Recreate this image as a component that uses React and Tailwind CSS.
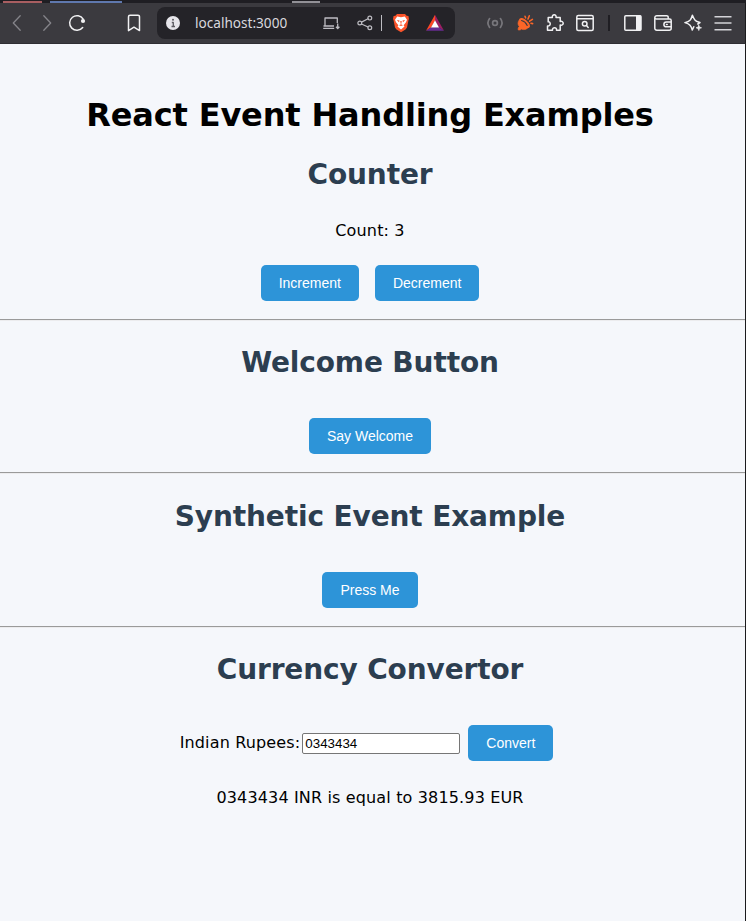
import { useState } from "react";

function Icon({ className = "", children }) {
  return (
    <svg
      viewBox="0 0 20 20"
      fill="none"
      stroke="#f1f1f3"
      strokeWidth="1.5"
      strokeLinecap="round"
      strokeLinejoin="round"
      className={`h-5 w-5 shrink-0 ${className}`}
    >
      {children}
    </svg>
  );
}

function AddressBar() {
  return (
    <div className="ml-[13px] flex h-8 w-[298px] shrink-0 items-center rounded-lg bg-[#242328] pl-1.5">
      <Icon>
        <circle cx="10" cy="10" r="7" fill="#e6e5ea" stroke="none" />
        <path d="M8.8 9.5H10.3V13.5M8.5 13.5H12" stroke="#5c5b61" strokeWidth="1.3" strokeLinecap="butt" />
        <circle cx="10" cy="6.7" r="1" fill="#5c5b61" stroke="none" />
      </Icon>
      <span className="ml-3 w-[127px] whitespace-nowrap font-['Noto_Sans',sans-serif] text-[13.6px] leading-5 tracking-normal text-[#d9d8de]">
        localhost:3000
      </span>
      <Icon>
        <g stroke="#bdbcc2" strokeWidth="1.3" strokeLinecap="butt">
          <path d="M3 13V5H15.3V10M1.2 15.3H12.2M1.5 13H12" />
          <path d="M15.7 10.5V15.5M14 13.8L15.7 15.6L17.4 13.8" />
        </g>
      </Icon>
      <Icon className="ml-[13px]">
        <g stroke="#bdbcc2" strokeWidth="1.2">
          <path d="M6.5 9.1L13 5.8M6.5 11L13 14" />
          <circle cx="4.8" cy="10" r="1.9" />
          <circle cx="14.8" cy="5.1" r="1.9" />
          <circle cx="14.8" cy="14.8" r="1.9" />
        </g>
      </Icon>
      <span className="ml-1.5 h-4 w-px bg-[#bdbcc2]" />
      <Icon className="ml-[9px]">
        <g stroke="none">
          <path d="M6 1H14L15.6 2.8L17.4 3L18 6L17.5 7L16 14.5L14.5 16.5L10 19.3L5.5 16.5L4 14.5L2.5 7L2 6L2.6 3L4.4 2.8Z" fill="#fb542b" />
          <path d="M6.2 3.6L10 4.2L13.8 3.6L16 6.7L15 9.3L12.6 12.2L13.5 13.5L10 16.6L6.5 13.5L7.4 12.2L5 9.3L4 6.7Z" fill="#fff" />
          <path d="M5.8 7L8.5 7.6L8 9.2ZM14.2 7L11.5 7.6L12 9.2ZM8 12.2L10 11.2L12 12.2L10 13ZM9.3 8H10.7L10.4 10.7H9.6Z" fill="#fb542b" />
        </g>
      </Icon>
      <Icon className="ml-3.5">
        <g stroke="none">
          <path d="M10 1.8L1 17.7L6.2 14.2L10 7.5Z" fill="#ff4724" />
          <path d="M10 1.8L19 17.7L13.8 14.2L10 7.5Z" fill="#9e1f63" />
          <path d="M1 17.7H19L13.8 14.2H6.2Z" fill="#662d91" />
          <path d="M10 7.2L6 14.4H14Z" fill="#fff" />
        </g>
      </Icon>
    </div>
  );
}

function BrowserChrome() {
  return (
    <header className="h-11 bg-[#3b3a3f]">
      <div className="flex h-[3px] items-start bg-[#1f1e23]">
        <span className="mt-px ml-[3px] h-0.5 w-[39px] bg-[#a85e61]" />
        <span className="mt-px ml-2 h-0.5 w-[72px] bg-[#5f78ae]" />
        <span className="mt-px ml-[170px] h-0.5 w-7 bg-[#929197]" />
      </div>
      <div className="flex h-[41px] items-center border-r border-b border-r-[#1b1b1d] border-b-[#2f2e33] pl-[7px]">
        <Icon>
          <path d="M13.2 2.8L6.3 10L13.2 17.2" stroke="#85848a" strokeWidth="1.3" />
        </Icon>
        <Icon className="ml-2.5">
          <path d="M6.8 2.8L13.7 10L6.8 17.2" stroke="#85848a" strokeWidth="1.3" />
        </Icon>
        <Icon className="ml-2.5">
          <path d="M16.2 6.2A7.3 7.3 0 1 0 15.7 14.5" />
          <circle cx="16" cy="8" r="2.1" fill="#f1f1f3" stroke="none" />
        </Icon>
        <Icon className="ml-[37px]">
          <path d="M4.5 3.7A1.5 1.5 0 0 1 6 2.2H14A1.5 1.5 0 0 1 15.5 3.7V17.6L10 14.2L4.5 17.6Z" />
        </Icon>
        <AddressBar />
        <div className="ml-[30px] flex items-center gap-2.5">
          <Icon>
            <g stroke="#77767b" strokeWidth="1.7">
              <circle cx="10" cy="10" r="2.4" />
              <path d="M4.6 5.6Q1.2 10 4.6 14.4M15.4 5.6Q18.8 10 15.4 14.4" />
            </g>
          </Icon>
          <Icon>
            <path d="M4.6 6.4C2.4 9 2.6 11.6 4.3 13.6L3.2 15V17H5.2L6.3 16C9.2 17.4 12.4 16.2 14.2 13.4Z" fill="#fb6628" stroke="#fb6628" strokeWidth="0.6" />
            <ellipse cx="9.6" cy="10" rx="5.9" ry="2.5" transform="rotate(43 9.6 10)" fill="#fb6628" stroke="#fb6628" strokeWidth="1.2" />
            <path d="M6.6 7.5C8.6 8 11.2 10.3 12.2 12.4" stroke="#3b3a3f" strokeWidth="1.2" />
            <path d="M10.6 4.8L10 3.3M13 6L14.3 2.8M14.6 8.2L17.4 6.4M16 10.2L17.6 10.6" stroke="#fb6628" strokeWidth="1.6" />
          </Icon>
          <Icon>
            <path d="M3.2 4.5H7.4C6.4 0.9 12 0.9 11 4.5H15.2V8.5C19.2 7.5 19.2 13 15.2 12V17.2H11.5C12 13.8 7.2 13.8 7.5 17.2H2.5V13C6 13.5 6 8.5 3.2 8.8Z" />
          </Icon>
          <Icon>
            <rect x="1.8" y="2.5" width="16.4" height="15" rx="1.5" />
            <path d="M2 5.7H18" />
            <circle cx="9.7" cy="10.8" r="2.3" />
            <path d="M11.5 12.6L13.2 14.4" />
          </Icon>
        </div>
        <span className="ml-[13px] h-4 w-0.5 bg-[#1f1e23]" />
        <div className="ml-[13px] flex items-center gap-2.5">
          <Icon>
            <rect x="1.8" y="2.7" width="16.2" height="14.5" rx="1" />
            <path d="M13 2.5H18V17.3H13Z" fill="#f1f1f3" stroke="none" />
          </Icon>
          <Icon>
            <path d="M15.2 5.8V4.2A1.5 1.5 0 0 0 13.7 2.7H3.8A2 2 0 0 0 1.8 4.7V15.2A2 2 0 0 0 3.8 17.2H16.2A2 2 0 0 0 18.2 15.2V7.5A1.6 1.6 0 0 0 16.6 5.9H3.2Q1.8 5.9 1.8 4.6" />
            <path d="M18 9H13.3A2.4 2.4 0 0 0 13.3 13.8H18M13.5 11.4H14.2" />
          </Icon>
          <Icon>
            <path d="M14.8 11L17 9.6Q12.8 8.5 12 7.2Q10.5 5 9.4 2.2Q8.3 5.8 7 7.2Q5.5 8.6 1.9 9.6Q5.6 10.7 7 12.2Q8.4 13.8 9.3 17L10.8 13.8" />
            <path d="M15.8 12L16.5 14L18.6 14.8L16.5 15.6L15.8 17.6L15 15.6L13 14.8L15 14Z" fill="#f1f1f3" strokeWidth="0.6" />
          </Icon>
          <Icon>
            <path d="M1.5 3.7H18.5M1.5 10H18.5M1.5 16.7H18.5" stroke="#d4d3d8" strokeWidth="1.6" strokeLinecap="butt" />
          </Icon>
        </div>
      </div>
    </header>
  );
}

function Button({ onClick, children }) {
  return (
    <button
      onClick={onClick}
      className="h-9 rounded-[5px] bg-[#2d94d8] px-[18px] font-['Liberation_Sans',sans-serif] text-sm leading-4 tracking-normal text-white"
    >
      {children}
    </button>
  );
}

function Heading({ children }) {
  return <h2 className="text-[28px] leading-8 font-bold tracking-[-0.13px] text-[#2c3e50]">{children}</h2>;
}

function Divider() {
  return <hr className="h-0.5 border-t border-b border-t-[#9a9a9a] border-b-[#ececee]" />;
}

export default function App() {
  const [count, setCount] = useState(3);
  const [amount, setAmount] = useState("0343434");
  const [converted, setConverted] = useState({ inr: "0343434", eur: "3815.93" });

  return (
    <div className="h-[921px] overflow-hidden bg-[#f5f7fb] font-[Verdana,'DejaVu_Sans',sans-serif] text-base leading-5 tracking-[0.15px] text-black">
      <BrowserChrome />
      <main className="h-[877px] border-r border-[#1b1b1d] text-center">
        <section className="flex h-[275px] flex-col items-center pt-[51px] pr-[5px]">
          <h1 className="text-[32px] leading-10 font-bold tracking-[-0.15px] whitespace-nowrap">
            React Event Handling Examples
          </h1>
          <div className="mt-6">
            <Heading>Counter</Heading>
          </div>
          <p className="mt-[30px]">Count: {count}</p>
          <div className="mt-6 flex gap-4">
            <Button onClick={() => setCount(count + 1)}>Increment</Button>
            <Button onClick={() => setCount(count - 1)}>Decrement</Button>
          </div>
        </section>
        <Divider />
        <section className="flex h-[151px] flex-col items-center pt-[26px] pr-[5px]">
          <Heading>Welcome Button</Heading>
          <div className="mt-[39px]">
            <Button>Say Welcome</Button>
          </div>
        </section>
        <Divider />
        <section className="flex h-[152px] flex-col items-center pt-[27px] pr-[5px]">
          <Heading>Synthetic Event Example</Heading>
          <div className="mt-[39px]">
            <Button>Press Me</Button>
          </div>
        </section>
        <Divider />
        <section className="flex flex-col items-center pt-[26px] pr-[5px]">
          <Heading>Currency Convertor</Heading>
          <div className="mt-[39px] flex items-center pr-[7px]">
            <label htmlFor="inr" className="whitespace-nowrap">
              Indian Rupees:
            </label>
            <input
              id="inr"
              value={amount}
              onChange={(e) => setAmount(e.target.value)}
              className="mt-px ml-0.5 h-[21px] w-[158px] rounded-[2px] border border-[#767676] bg-white px-0.5 font-['Liberation_Sans',sans-serif] text-[13.333px] leading-[15px] tracking-normal"
            />
            <div className="ml-2">
              <Button onClick={() => setConverted({ inr: amount, eur: (Number(amount) / 90).toFixed(2) })}>
                Convert
              </Button>
            </div>
          </div>
          <p className="mt-[27px]">
            {converted.inr} INR is equal to {converted.eur} EUR
          </p>
        </section>
      </main>
    </div>
  );
}
